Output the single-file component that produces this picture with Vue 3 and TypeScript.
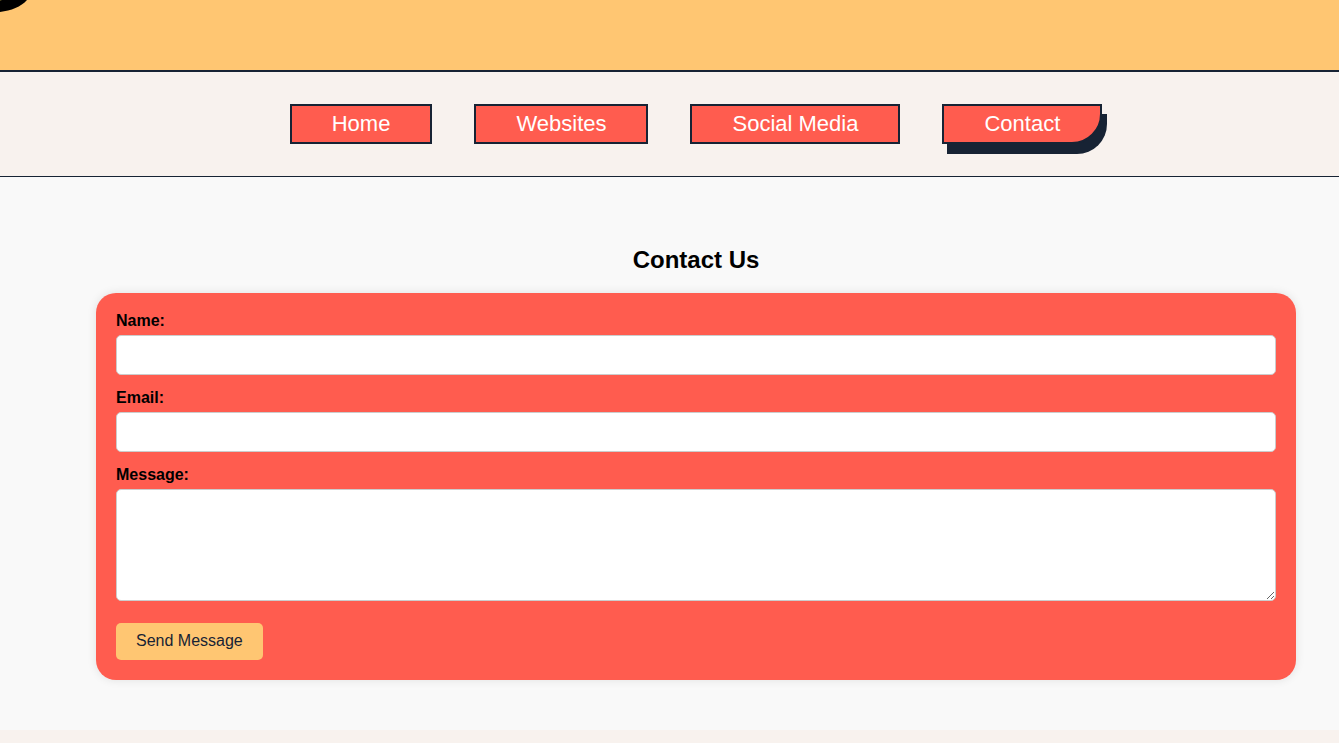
<script setup lang="ts">
import { reactive } from 'vue'

interface NavLink {
  label: string
  href: string
  active?: boolean
}

const links: NavLink[] = [
  { label: 'Home', href: '#home' },
  { label: 'Websites', href: '#websites' },
  { label: 'Social Media', href: '#social-media' },
  { label: 'Contact', href: '#contact', active: true },
]

const form = reactive({ name: '', email: '', message: '' })
</script>

<template>
  <div class="page">
    <header class="banner">
      <svg class="logo" width="30" height="14" viewBox="0 0 30 14" aria-hidden="true">
        <path d="M0 0H27C21 7 11 10.500 0 12Z" fill="#000" />
        <path d="M0 0H2L0 1Z" fill="#5c5427" />
      </svg>
    </header>

    <nav class="nav">
      <a
        v-for="link in links"
        :key="link.label"
        :href="link.href"
        class="nav-link"
        :class="{ active: link.active }"
      >{{ link.label }}</a>
    </nav>

    <main id="contact" class="contact">
      <h2 class="title">Contact Us</h2>
      <form class="card" @submit.prevent>
        <label for="name">Name:</label>
        <input id="name" v-model="form.name" class="field" type="text" name="name" />
        <label for="email">Email:</label>
        <input id="email" v-model="form.email" class="field" type="email" name="email" />
        <label for="message">Message:</label>
        <textarea id="message" v-model="form.message" class="field message" name="message"></textarea>
        <button type="submit" class="send">Send Message</button>
      </form>
    </main>
  </div>
</template>

<style>
body {
  margin: 0;
  background: #f8f2ee;
}
</style>

<style scoped>
.page {
  font-family: "Liberation Sans", Arial, Helvetica, sans-serif;
  font-size: 16px;
  line-height: 18px;
  color: #000;
}

.banner {
  height: 70px;
  background: #ffc672;
  border-bottom: 2px solid #172334;
}

.logo {
  display: block;
}

.nav {
  display: flex;
  justify-content: center;
  gap: 42px;
  padding: 32px 0 32px 53px;
  border-bottom: 1px solid #172334;
}

.nav-link {
  padding: 5px 40px;
  border: 2px solid #172334;
  background: #ff5c4f;
  color: #fff;
  font-size: 22px;
  line-height: 26px;
  text-decoration: none;
  white-space: nowrap;
}

.nav-link.active {
  border-bottom-right-radius: 30px;
  box-shadow: 5px 10px 0 #172334;
}

.contact {
  padding: 69px 43px 50px 96px;
  background: #f9f9f9;
}

.title {
  margin: 0 0 20px;
  font-size: 24px;
  line-height: 27px;
  text-align: center;
}

.card {
  display: flex;
  flex-direction: column;
  box-sizing: border-box;
  max-width: 1200px;
  margin: 0 auto;
  padding: 20px;
  border-radius: 20px;
  background: #ff5c4f;
  box-shadow: 0 0 10px rgba(0, 0, 0, 0.1);
}

label {
  margin-bottom: 6px;
  font-weight: bold;
  line-height: 16px;
}

.field {
  box-sizing: border-box;
  width: 100%;
  height: 40px;
  margin: 0 0 15px;
  padding: 10px;
  border: 1px solid #ccc;
  border-radius: 5px;
  background: #fff;
  font: inherit;
}

.message {
  height: 112px;
  margin-bottom: 22px;
  resize: vertical;
}

.send {
  align-self: flex-start;
  padding: 9px 20px 10px;
  border: 0;
  border-radius: 5px;
  background: #ffc672;
  color: #172334;
  font: inherit;
  cursor: pointer;
}
</style>
